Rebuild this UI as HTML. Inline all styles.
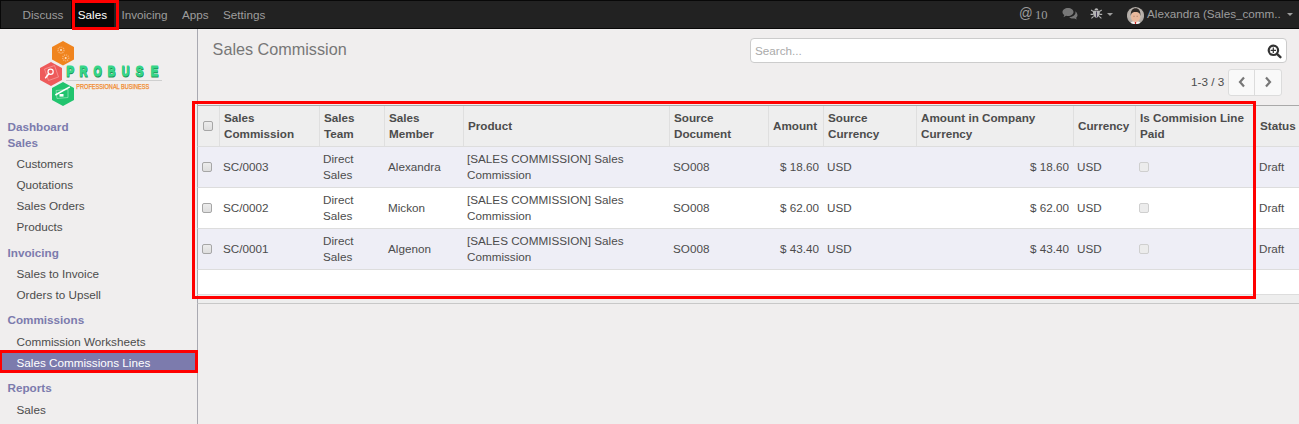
<!DOCTYPE html>
<html><head><meta charset="utf-8">
<style>
*{box-sizing:border-box;margin:0;padding:0}
html,body{width:1299px;height:424px;overflow:hidden}
body{position:relative;background:#f0eeee;font-family:"Liberation Sans",sans-serif;font-size:11.7px;color:#4c4c4c}
.a{position:absolute}
.t{position:absolute;white-space:nowrap;line-height:16px}
.b{font-weight:bold}
#nav{position:absolute;left:0;top:0;width:1320px;height:29px;background:#222;border:1px solid #080808}
.nv{color:#9d9d9d}
.hd{color:#7c7bad;font-weight:bold}
.cb{position:absolute;width:10px;height:10px;border:1px solid #a6a6a6;border-radius:2px;background:linear-gradient(#ececec,#dedede)}
.cbd{border-color:#cfcfcf;background:#ececec}
.red{position:absolute;border:3px solid #ff0000}
</style></head><body>
<!-- NAVBAR -->
<div id="nav"></div>
<div class="a" style="left:71px;top:1px;width:43px;height:27px;background:#080808"></div>
<div class="t nv" style="left:22.5px;top:7px">Discuss</div>
<div class="t" style="left:77.8px;top:7px;color:#fff">Sales</div>
<div class="t nv" style="left:121.4px;top:7px">Invoicing</div>
<div class="t nv" style="left:182px;top:7px">Apps</div>
<div class="t nv" style="left:223px;top:7px">Settings</div>
<div class="red" style="left:72px;top:0;width:47px;height:30px"></div>

<div class="t nv" style="left:1019px;top:5.8px;font-size:13.5px;transform:scaleY(1.12);transform-origin:0 100%">@</div>
<div class="t nv" style="left:1035px;top:7px;font-family:'Liberation Serif',serif;font-size:12.5px">10</div>
<svg class="a" style="left:1062px;top:7px" width="16" height="13" viewBox="0 0 16 13">
 <path d="M6 1C2.8 1 .5 2.8 .5 5c0 1.2.7 2.3 1.8 3l-.8 2.2 2.6-1.5c.6.2 1.2.3 1.9.3 3.2 0 5.5-1.8 5.5-4S9.2 1 6 1z" fill="#777"/>
 <path d="M13.2 4.2c.2.4.3.8.3 1.3 0 2.6-2.8 4.6-6.3 4.7.9.9 2.3 1.4 3.8 1.4.5 0 1-.1 1.5-.2l2.2 1.2-.6-1.9c.9-.6 1.4-1.5 1.4-2.4 0-1.6-.9-3.1-2.3-4.1z" fill="#777"/>
</svg>
<svg class="a" style="left:1090px;top:7px" width="13" height="13" viewBox="0 0 13 13">
 <path d="M4.5 3.3C4.5 2.1 5.3 1.3 6.4 1.3s1.9.8 1.9 2z" fill="#b4b4b4"/>
 <path d="M3.1 3.7h6.6c.1.8.1 1.5.1 2.4 0 2.6-1.5 4.6-3.4 4.8-1.9-.2-3.4-2.2-3.4-4.8 0-.9 0-1.6.1-2.4z" fill="#b4b4b4"/>
 <path d="M6 4.6h.9v5.9H6z" fill="#3a3050"/>
 <path d="M3.4 4.6L1.1 3M3.2 7.4H.6M3.6 9.4l-2.2 1.9M9.4 4.6L11.7 3M9.6 7.4h2.6M9.2 9.4l2.2 1.9" stroke="#b4b4b4" stroke-width="1.1"/>
</svg>
<div class="a" style="left:1107px;top:13px;width:0;height:0;border-left:3px solid transparent;border-right:3px solid transparent;border-top:3px solid #9d9d9d"></div>
<svg class="a" style="left:1127px;top:7px" width="17" height="17" viewBox="0 0 17 17">
 <defs><clipPath id="cc"><circle cx="8.5" cy="8.6" r="8.6"/></clipPath>
 <radialGradient id="rg" cx="50%" cy="45%" r="55%"><stop offset="0" stop-color="#d8d2cc"/><stop offset="1" stop-color="#a9a39e"/></radialGradient></defs>
 <g clip-path="url(#cc)">
 <rect width="17" height="17" fill="url(#rg)"/>
 <path d="M2.5 17.5c.8-2.6 3-3.6 6-3.6s5.2 1 6 3.6z" fill="#f4f4f4"/>
 <path d="M7.7 14.6h1.6l-.3 2.6h-1z" fill="#d32525"/>
 <ellipse cx="8.6" cy="9.6" rx="4.6" ry="5.4" fill="#e8b89c"/>
 <path d="M3.8 9.2C3.2 3.6 5.6 1.2 8.6 1.2s5.4 2.4 4.8 8c-.3-2.6-1.1-4.2-4.8-4.2S4.1 6.6 3.8 9.2z" fill="#2e2926"/>
 <path d="M6.4 9.3h1.2M9.6 9.3h1.2" stroke="#8a6150" stroke-width=".6"/>
 </g>
</svg>
<div class="t nv" style="left:1147px;top:6px">Alexandra (Sales_comm..</div>
<div class="a" style="left:1287px;top:13px;width:0;height:0;border-left:3px solid transparent;border-right:3px solid transparent;border-top:3px solid #9d9d9d"></div>

<!-- SIDEBAR -->
<div class="a" style="left:197px;top:29px;width:1px;height:395px;background:#a9a9b1"></div>
<!-- logo -->
<svg class="a" style="left:38px;top:40px" width="126" height="66" viewBox="0 0 126 66">
 <polygon points="25,1 36,7 36,19.5 25,25.5 14,19.5 14,7" fill="#f0841e"/>
 <polygon points="13,22 24,28 24,40 13,46 2,40 2,28" fill="#ee5a5a"/>
 <polygon points="25,42 36,48 36,60 25,66 14,60 14,48" fill="#21c46e"/>
 <circle cx="23" cy="10.1" r="3" fill="none" stroke="#f7b070" stroke-width="1.4" stroke-dasharray="1.2 .8"/>
 <circle cx="23" cy="10.1" r="1" fill="#fde3c8"/>
 <circle cx="27.7" cy="17.9" r="3" fill="none" stroke="#f7b070" stroke-width="1.4" stroke-dasharray="1.2 .8"/>
 <circle cx="27.7" cy="17.9" r="1" fill="#fde3c8"/>
 <path d="M6.5 29l10-3.5 4 11.5-10 3.5z" fill="none" stroke="#f59a9a" stroke-width=".8"/>
 <circle cx="12.6" cy="31.8" r="2.6" fill="none" stroke="#fff" stroke-width="1.2"/>
 <path d="M10.8 33.8l-3.2 4" stroke="#fff" stroke-width="1.5" stroke-linecap="round"/>
 <path d="M18 50.5l12-1v8l-11 1z" fill="none" stroke="#8fe2b4" stroke-width=".8"/>
 <path d="M17.3 55l14.5-8.2" stroke="#fff" stroke-width="1.5"/>
 <rect x="21.5" y="54" width="4" height="2.6" fill="#fff"/>
 <g font-family="Liberation Sans" font-weight="bold" font-size="14.8" lengthAdjust="spacingAndGlyphs">
 <g fill="#1a8f52" stroke="#1a8f52" stroke-width="1.1">
 <text x="28.6" y="37.3" textLength="7.6" lengthAdjust="spacingAndGlyphs">P</text>
 <text x="41.8" y="37.3" textLength="7.8" lengthAdjust="spacingAndGlyphs">R</text>
 <text x="55.8" y="37.3" textLength="8.2" lengthAdjust="spacingAndGlyphs">O</text>
 <text x="69.9" y="37.3" textLength="7.6" lengthAdjust="spacingAndGlyphs">B</text>
 <text x="84" y="37.3" textLength="7.6" lengthAdjust="spacingAndGlyphs">U</text>
 <text x="98" y="37.3" textLength="7.6" lengthAdjust="spacingAndGlyphs">S</text>
 <text x="112.9" y="37.3" textLength="7.4" lengthAdjust="spacingAndGlyphs">E</text>
 </g>
 <g fill="#36d688" stroke="#36d688" stroke-width="1.0">
 <text x="28.4" y="36.4" textLength="7.6" lengthAdjust="spacingAndGlyphs">P</text>
 <text x="41.6" y="36.4" textLength="7.8" lengthAdjust="spacingAndGlyphs">R</text>
 <text x="55.6" y="36.4" textLength="8.2" lengthAdjust="spacingAndGlyphs">O</text>
 <text x="69.7" y="36.4" textLength="7.6" lengthAdjust="spacingAndGlyphs">B</text>
 <text x="83.8" y="36.4" textLength="7.6" lengthAdjust="spacingAndGlyphs">U</text>
 <text x="97.8" y="36.4" textLength="7.6" lengthAdjust="spacingAndGlyphs">S</text>
 <text x="112.7" y="36.4" textLength="7.4" lengthAdjust="spacingAndGlyphs">E</text>
 </g>
 </g>
 <rect x="28" y="40" width="96" height="1" fill="#cfcfcf"/>
 <text x="38.3" y="49" font-family="Liberation Sans" font-size="6.6" fill="#f08a2a" stroke="#f08a2a" stroke-width="0.25" textLength="73" lengthAdjust="spacingAndGlyphs">PROFESSIONAL BUSINESS</text>
</svg>

<div class="t hd" style="left:7.5px;top:119px">Dashboard</div>
<div class="t hd" style="left:7.5px;top:135px">Sales</div>
<div class="t" style="left:16.5px;top:156px">Customers</div>
<div class="t" style="left:16.5px;top:177px">Quotations</div>
<div class="t" style="left:16.5px;top:198px">Sales Orders</div>
<div class="t" style="left:16.5px;top:219px">Products</div>
<div class="t hd" style="left:7.5px;top:245px">Invoicing</div>
<div class="t" style="left:16.5px;top:266px">Sales to Invoice</div>
<div class="t" style="left:16.5px;top:287px">Orders to Upsell</div>
<div class="t hd" style="left:7.5px;top:312px">Commissions</div>
<div class="t" style="left:16.5px;top:334px">Commission Worksheets</div>
<div class="a" style="left:0;top:351px;width:197px;height:21px;background:#7c7bad"></div>
<div class="t" style="left:16.5px;top:355px;color:#fff">Sales Commissions Lines</div>
<div class="red" style="left:-1px;top:350px;width:199px;height:23px"></div>
<div class="t hd" style="left:7.5px;top:380px">Reports</div>
<div class="t" style="left:16.5px;top:402px">Sales</div>

<!-- CONTROL PANEL -->
<div class="t" style="left:212.6px;top:39px;font-size:16.2px;line-height:20px;color:#777">Sales Commission</div>
<div class="a" style="left:750px;top:38px;width:537px;height:25px;background:#fff;border:1px solid #ccc;border-radius:4px"></div>
<div class="t" style="left:755px;top:43px;color:#aaa">Search...</div>
<svg class="a" style="left:1267px;top:44px" width="16" height="15" viewBox="0 0 16 15">
 <circle cx="6.4" cy="6.3" r="4.7" fill="none" stroke="#333" stroke-width="2.2"/>
 <path d="M10 9.9l3.4 3.2" stroke="#333" stroke-width="2.5" stroke-linecap="round"/>
 <path d="M3.6 6.3h5.4M6.3 3.6v5.4" stroke="#333" stroke-width="1.2"/>
</svg>
<div class="t" style="left:1191px;top:74px">1-3 / 3</div>
<div class="a" style="left:1228px;top:69px;width:54px;height:27px;background:#f9f9f9;border:1px solid #dcdcdc;border-radius:3px"></div>
<div class="a" style="left:1254px;top:70px;width:1px;height:25px;background:#dcdcdc"></div>
<svg class="a" style="left:1236px;top:75px" width="40" height="14" viewBox="0 0 40 14">
 <path d="M8 2.5L4 7l4 4.5" fill="none" stroke="#777" stroke-width="2.2"/>
 <path d="M30 2.5L34 7l-4 4.5" fill="none" stroke="#777" stroke-width="2.2"/>
</svg>

<!-- TABLE -->
<div class="a" style="left:197px;top:105px;width:1102px;height:198px;background:#fff"></div>
<div class="a" style="left:197px;top:105px;width:1102px;height:42px;background:#eee;border-top:1px solid #a9a9a9;border-bottom:1px solid #ddd;border-left:1px solid #a9a9b1"></div>
<div class="a" style="left:197px;top:147px;width:1102px;height:41px;background:#eeeef6;border-bottom:1px solid #ddd;border-left:1px solid #a9a9b1"></div>
<div class="a" style="left:197px;top:188px;width:1102px;height:41px;background:#fff;border-bottom:1px solid #ddd;border-left:1px solid #a9a9b1"></div>
<div class="a" style="left:197px;top:229px;width:1102px;height:41px;background:#eeeef6;border-bottom:1px solid #ddd;border-left:1px solid #a9a9b1"></div>
<div class="a" style="left:197px;top:270px;width:1102px;height:25px;background:#fff;border-bottom:1px solid #ddd;border-left:1px solid #a9a9b1"></div>
<div class="a" style="left:197px;top:295px;width:1102px;height:9px;background:#eee;border-bottom:1px solid #c8c8c8;border-left:1px solid #a9a9b1"></div>
<!-- header separators -->
<div class="a" style="left:219px;top:106px;width:1px;height:40px;background:#dfdfdf"></div>
<div class="a" style="left:319px;top:106px;width:1px;height:40px;background:#dfdfdf"></div>
<div class="a" style="left:384px;top:106px;width:1px;height:40px;background:#dfdfdf"></div>
<div class="a" style="left:463px;top:106px;width:1px;height:40px;background:#dfdfdf"></div>
<div class="a" style="left:669px;top:106px;width:1px;height:40px;background:#dfdfdf"></div>
<div class="a" style="left:768px;top:106px;width:1px;height:40px;background:#dfdfdf"></div>
<div class="a" style="left:823px;top:106px;width:1px;height:40px;background:#dfdfdf"></div>
<div class="a" style="left:916px;top:106px;width:1px;height:40px;background:#dfdfdf"></div>
<div class="a" style="left:1073px;top:106px;width:1px;height:40px;background:#dfdfdf"></div>
<div class="a" style="left:1135px;top:106px;width:1px;height:40px;background:#dfdfdf"></div>
<div class="a" style="left:1254px;top:106px;width:1px;height:40px;background:#dfdfdf"></div>

<div class="cb" style="left:203px;top:121px"></div>
<div class="t b" style="left:224px;top:110px">Sales<br>Commission</div>
<div class="t b" style="left:324px;top:110px">Sales<br>Team</div>
<div class="t b" style="left:389px;top:110px">Sales<br>Member</div>
<div class="t b" style="left:468px;top:118px">Product</div>
<div class="t b" style="left:674px;top:110px">Source<br>Document</div>
<div class="t b" style="left:773px;top:118px">Amount</div>
<div class="t b" style="left:828px;top:110px">Source<br>Currency</div>
<div class="t b" style="left:921px;top:110px">Amount in Company<br>Currency</div>
<div class="t b" style="left:1078px;top:118px">Currency</div>
<div class="t b" style="left:1140px;top:110px">Is Commision Line<br>Paid</div>
<div class="t b" style="left:1260px;top:118px">Status</div>

<!-- rows -->
<div class="cb" style="left:202px;top:162px"></div>
<div class="t" style="left:223px;top:159px">SC/0003</div>
<div class="t" style="left:323px;top:151px">Direct<br>Sales</div>
<div class="t" style="left:388px;top:159px">Alexandra</div>
<div class="t" style="left:467px;top:151px">[SALES COMMISSION] Sales<br>Commission</div>
<div class="t" style="left:673px;top:159px">SO008</div>
<div class="t" style="left:700px;top:159px;width:119px;text-align:right">$ 18.60</div>
<div class="t" style="left:827px;top:159px">USD</div>
<div class="t" style="left:950px;top:159px;width:119px;text-align:right">$ 18.60</div>
<div class="t" style="left:1077px;top:159px">USD</div>
<div class="cb cbd" style="left:1139px;top:162px"></div>
<div class="t" style="left:1259px;top:159px">Draft</div>

<div class="cb" style="left:202px;top:203px"></div>
<div class="t" style="left:223px;top:200px">SC/0002</div>
<div class="t" style="left:323px;top:192px">Direct<br>Sales</div>
<div class="t" style="left:388px;top:200px">Mickon</div>
<div class="t" style="left:467px;top:192px">[SALES COMMISSION] Sales<br>Commission</div>
<div class="t" style="left:673px;top:200px">SO008</div>
<div class="t" style="left:700px;top:200px;width:119px;text-align:right">$ 62.00</div>
<div class="t" style="left:827px;top:200px">USD</div>
<div class="t" style="left:950px;top:200px;width:119px;text-align:right">$ 62.00</div>
<div class="t" style="left:1077px;top:200px">USD</div>
<div class="cb cbd" style="left:1139px;top:203px"></div>
<div class="t" style="left:1259px;top:200px">Draft</div>

<div class="cb" style="left:202px;top:244px"></div>
<div class="t" style="left:223px;top:241px">SC/0001</div>
<div class="t" style="left:323px;top:233px">Direct<br>Sales</div>
<div class="t" style="left:388px;top:241px">Algenon</div>
<div class="t" style="left:467px;top:233px">[SALES COMMISSION] Sales<br>Commission</div>
<div class="t" style="left:673px;top:241px">SO008</div>
<div class="t" style="left:700px;top:241px;width:119px;text-align:right">$ 43.40</div>
<div class="t" style="left:827px;top:241px">USD</div>
<div class="t" style="left:950px;top:241px;width:119px;text-align:right">$ 43.40</div>
<div class="t" style="left:1077px;top:241px">USD</div>
<div class="cb cbd" style="left:1139px;top:244px"></div>
<div class="t" style="left:1259px;top:241px">Draft</div>

<div class="red" style="left:192px;top:101px;height:198px;width:1064px"></div>
</body></html>
